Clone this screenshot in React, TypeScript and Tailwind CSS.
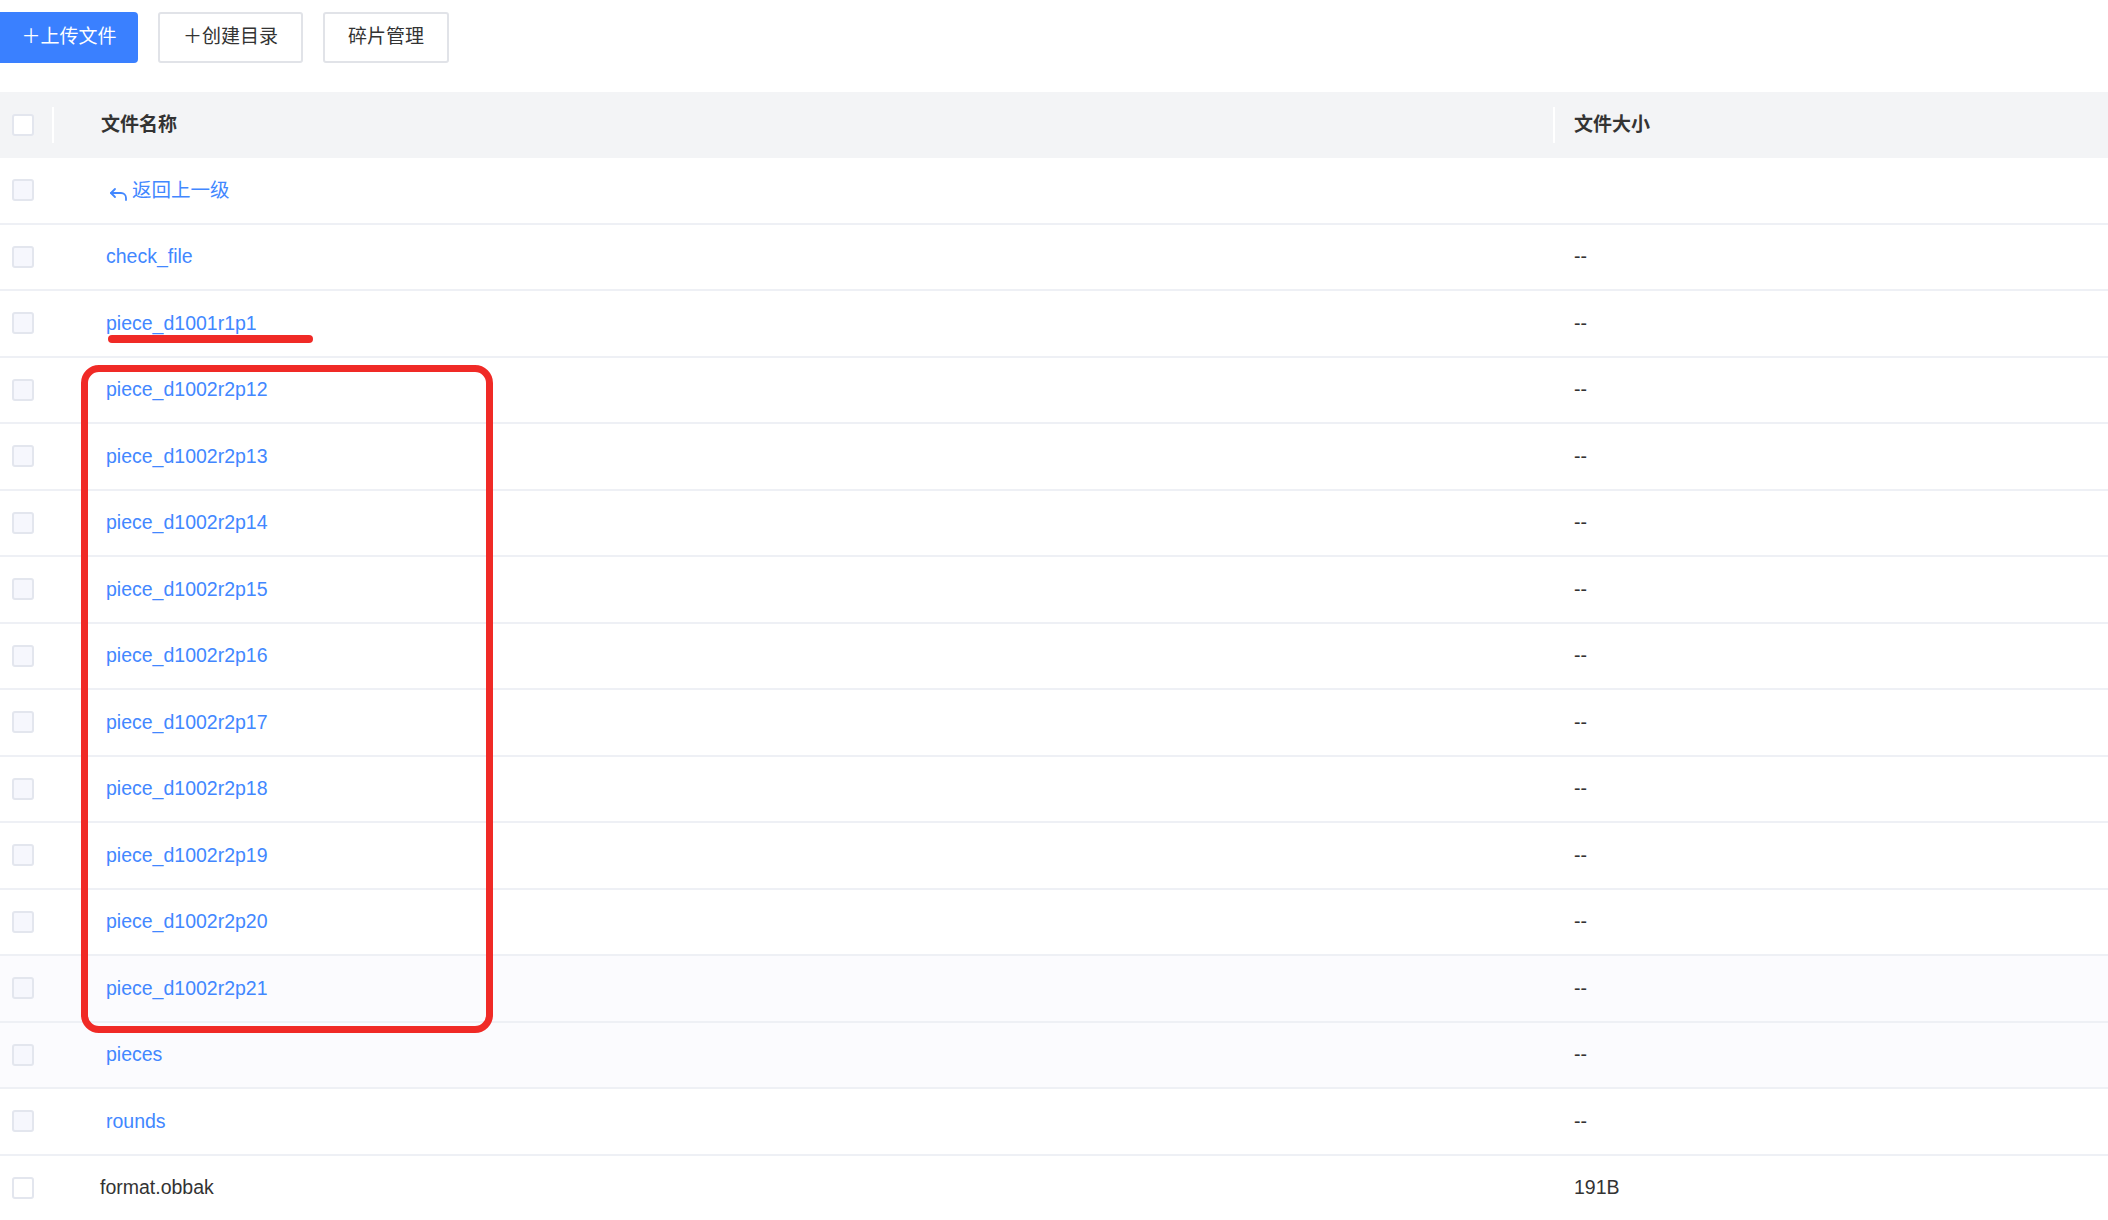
import React from "react";

const ROWS: { name: string; size: string; link: boolean; tint?: boolean }[] = [
  { name: "check_file", size: "--", link: true },
  { name: "piece_d1001r1p1", size: "--", link: true },
  { name: "piece_d1002r2p12", size: "--", link: true },
  { name: "piece_d1002r2p13", size: "--", link: true },
  { name: "piece_d1002r2p14", size: "--", link: true },
  { name: "piece_d1002r2p15", size: "--", link: true },
  { name: "piece_d1002r2p16", size: "--", link: true },
  { name: "piece_d1002r2p17", size: "--", link: true },
  { name: "piece_d1002r2p18", size: "--", link: true },
  { name: "piece_d1002r2p19", size: "--", link: true },
  { name: "piece_d1002r2p20", size: "--", link: true },
  { name: "piece_d1002r2p21", size: "--", link: true, tint: true },
  { name: "pieces", size: "--", link: true, tint: true },
  { name: "rounds", size: "--", link: true },
  { name: "format.obbak", size: "191B", link: false },
];

function Check({ white }: { white?: boolean }) {
  return (
    <span
      className={
        "block w-[22px] h-[22px] rounded-[3px] border-2 border-[#e3e6ee] " +
        (white ? "bg-white" : "bg-[#f6f7fd]")
      }
    />
  );
}

function BackArrow() {
  return (
    <svg width="20" height="16" viewBox="0 0 20 16" fill="none" className="mt-[6px]">
      <path d="M6 4 L2 8 L6 12" stroke="#4287ff" strokeWidth="1.8" strokeLinecap="round" strokeLinejoin="round" />
      <path d="M2 8 H12 A5 5 0 0 1 17 13 V15" stroke="#4287ff" strokeWidth="1.8" strokeLinecap="round" />
    </svg>
  );
}

export default function App() {
  return (
    <div className="relative w-[2108px] h-[1220px] overflow-hidden bg-white text-[19.5px] text-[#333] font-['Liberation_Sans','Noto_Sans_CJK_SC',sans-serif]">
      {/* toolbar */}
      <div className="flex items-start gap-[20px] h-[92px] pt-[12px] text-[19px]">
        <button className="h-[51px] w-[138px] rounded-r-[4px] bg-[#3a80ff] text-white">＋上传文件</button>
        <button className="h-[51px] w-[145px] rounded-[3px] border-2 border-[#e1e3e8] bg-white">＋创建目录</button>
        <button className="h-[51px] w-[126px] rounded-[3px] border-2 border-[#e1e3e8] bg-white">碎片管理</button>
      </div>

      {/* header */}
      <div className="flex h-[66px] bg-[#f3f4f6] font-bold text-[19px]">
        <div className="relative w-[54px] h-full flex items-center pl-[12px]">
          <Check white />
          <span className="absolute right-0 top-[15px] h-[36px] w-[2px] bg-white" />
        </div>
        <div className="w-[1499px] h-full flex items-center pl-[47px]">文件名称</div>
        <div className="relative flex-1 h-full flex items-center pl-[21px]">
          <span className="absolute left-0 top-[15px] h-[36px] w-[2px] bg-white" />
          文件大小
        </div>
      </div>

      {/* back row */}
      <div className="flex items-center h-[66.5px] border-b-2 border-[#eef0f5]">
        <div className="w-[54px] pl-[12px]">
          <Check />
        </div>
        <div className="flex items-center gap-[3px] pl-[55px] text-[#4287ff]">
          <BackArrow />
          <span>返回上一级</span>
        </div>
      </div>

      {ROWS.map((r) => (
        <div
          key={r.name}
          className={
            "flex items-center h-[66.5px] border-b-2 border-[#eef0f5] " + (r.tint ? "bg-[#fbfbfe]" : "bg-white")
          }
        >
          <div className="w-[54px] pl-[12px]">
            <Check white={!r.link} />
          </div>
          <div className={"w-[1499px] " + (r.link ? "pl-[52px] text-[#4287ff]" : "pl-[46px] text-[#333]")}>
            {r.name}
          </div>
          <div className="flex-1 pl-[21px] text-[#333]">{r.size}</div>
        </div>
      ))}

      {/* annotations */}
      <span className="absolute left-[108px] top-[335px] w-[205px] h-[8px] rounded-full bg-[#f02a26]" />
      <span className="absolute left-[81px] top-[365px] w-[412px] h-[668px] rounded-[18px] border-[7px] border-[#f02a26]" />
    </div>
  );
}
